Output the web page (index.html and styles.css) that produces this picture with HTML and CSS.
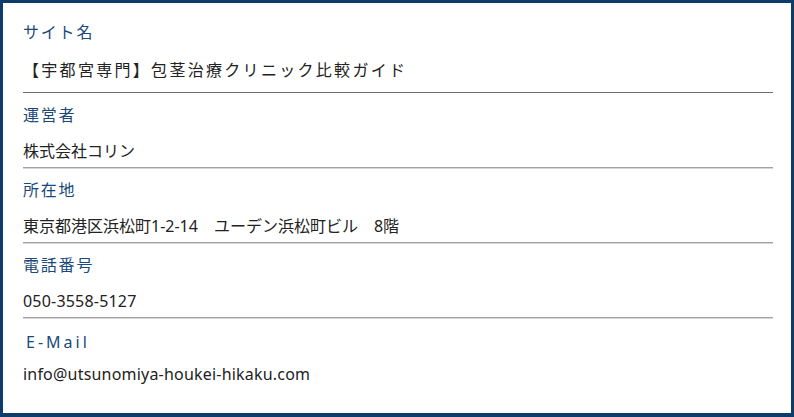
FILE: index.html
```html
<!DOCTYPE html>
<html lang="ja">
<head>
<meta charset="utf-8">
<link rel="stylesheet" href="styles.css">
</head>
<body>
<div class="frame">
  <dl class="info">
    <div class="row row-first">
      <dt class="label">サイト名</dt>
      <dd class="value value-spaced">【宇都宮専門】包茎治療クリニック比較ガイド</dd>
    </div>
    <div class="row">
      <dt class="label">運営者</dt>
      <dd class="value">株式会社コリン</dd>
    </div>
    <div class="row">
      <dt class="label">所在地</dt>
      <dd class="value">東京都港区浜松町1-2-14　ユーデン浜松町ビル　8階</dd>
    </div>
    <div class="row">
      <dt class="label">電話番号</dt>
      <dd class="value value-latin">050-3558-5127</dd>
    </div>
    <div class="row row-last">
      <dt class="label label-latin">E-Mail</dt>
      <dd class="value value-latin">info@utsunomiya-houkei-hikaku.com</dd>
    </div>
  </dl>
</div>
</body>
</html>
```
FILE: styles.css
```css
html, body {
  margin: 0;
  padding: 0;
  background: #ffffff;
}
.frame {
  box-sizing: border-box;
  width: 794px;
  height: 417px;
  border-style: solid;
  border-color: #0e3c6a;
  border-width: 3px 3px 4px 3px;
  padding: 17px 18px 0 20px;
  font-family: "Noto Sans", "Noto Sans CJK JP", sans-serif;
}
.info {
  margin: 0;
}
.row {
  padding-top: 10px;
}
.label {
  font-size: 16px;
  line-height: 24px;
  letter-spacing: 1.8px;
  color: #1a4a7c;
}
.label-latin {
  padding-left: 3px;
  letter-spacing: 3px;
}
.value {
  margin: 12px 0 0 0;
  padding-bottom: 4px;
  font-size: 16px;
  line-height: 24px;
  color: #222222;
  border-bottom: 1px solid #a3a3a3;
  box-shadow: 0 1px 0 #d6d6d6;
}
.value-latin {
  letter-spacing: 0.2px;
}
.row-first {
  padding-top: 0;
}
.row-first .value {
  margin-top: 14px;
  padding-bottom: 10px;
  border-bottom-color: #6e6e6e;
  box-shadow: none;
}
.value-spaced {
  letter-spacing: 2.3px;
}
.row-last {
  padding-top: 12px;
}
.row-last .value {
  margin-top: 8px;
  border-bottom: none;
  box-shadow: none;
}
```
